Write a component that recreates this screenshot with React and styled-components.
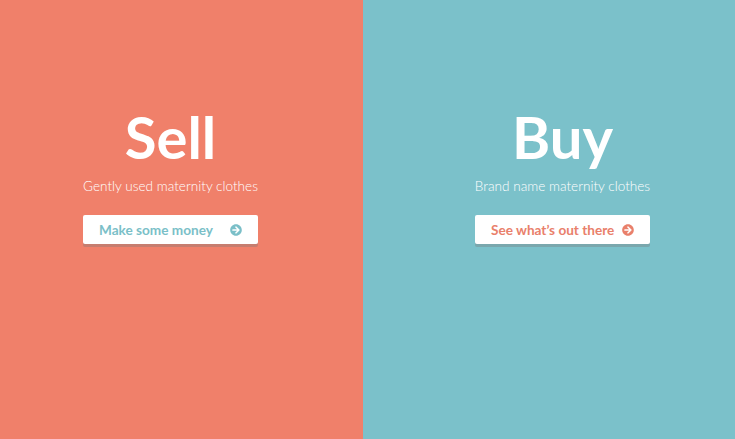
import React from 'react';
import styled, { createGlobalStyle } from 'styled-components';
import { FaArrowCircleRight } from 'react-icons/fa';

const Global = createGlobalStyle`
  html, body {
    margin: 0;
    padding: 0;
  }
  body {
    font-family: Lato, "Open Sans", sans-serif;
  }
`;

const Page = styled.div`
  display: flex;
  width: 100%;
  height: 439px;
  overflow: hidden;
`;

const Panel = styled.section`
  flex: ${props => (props.fixed ? '0 0 363px' : '1 1 auto')};
  background-color: ${props => props.bg};
  padding-top: 108px;
  padding-left: ${props => props.offset}px;
  box-sizing: border-box;
`;

const Content = styled.div`
  width: 175px;
  display: flex;
  flex-direction: column;
  align-items: center;
`;

const Title = styled.h1`
  margin: 0;
  font-size: 58px;
  line-height: 58px;
  font-weight: 700;
  color: #fff;
`;

const Subtitle = styled.p`
  margin: 12px 0 0;
  font-size: 13.6px;
  line-height: 16px;
  font-weight: 300;
  color: #fff;
  white-space: nowrap;
`;

const Action = styled.a`
  margin-top: 21px;
  width: 175px;
  height: 29px;
  box-sizing: border-box;
  display: flex;
  align-items: center;
  justify-content: space-between;
  padding: 0 16px;
  background: #fff;
  border-radius: 2px;
  box-shadow: 0 3px 0 rgba(120, 120, 120, 0.35);
  color: ${props => props.tone};
  font-size: 13.6px;
  font-weight: 700;
  text-decoration: none;
  cursor: pointer;

  svg {
    width: 12px;
    height: 12px;
  }
`;

const Side = ({ bg, tone, offset, fixed, title, text, action }) => (
  <Panel bg={bg} offset={offset} fixed={fixed}>
    <Content>
      <Title>{title}</Title>
      <Subtitle>{text}</Subtitle>
      <Action tone={tone}>
        <span>{action}</span>
        <FaArrowCircleRight />
      </Action>
    </Content>
  </Panel>
);

export default function App() {
  return (
    <>
      <Global />
      <Page>
        <Side
          fixed
          bg="#f0806a"
          tone="#7bbfc8"
          offset={83}
          title="Sell"
          text="Gently used maternity clothes"
          action="Make some money"
        />
        <Side
          bg="#7bc1ca"
          tone="#e9806b"
          offset={112}
          title="Buy"
          text="Brand name maternity clothes"
          action="See what’s out there"
        />
      </Page>
    </>
  );
}
